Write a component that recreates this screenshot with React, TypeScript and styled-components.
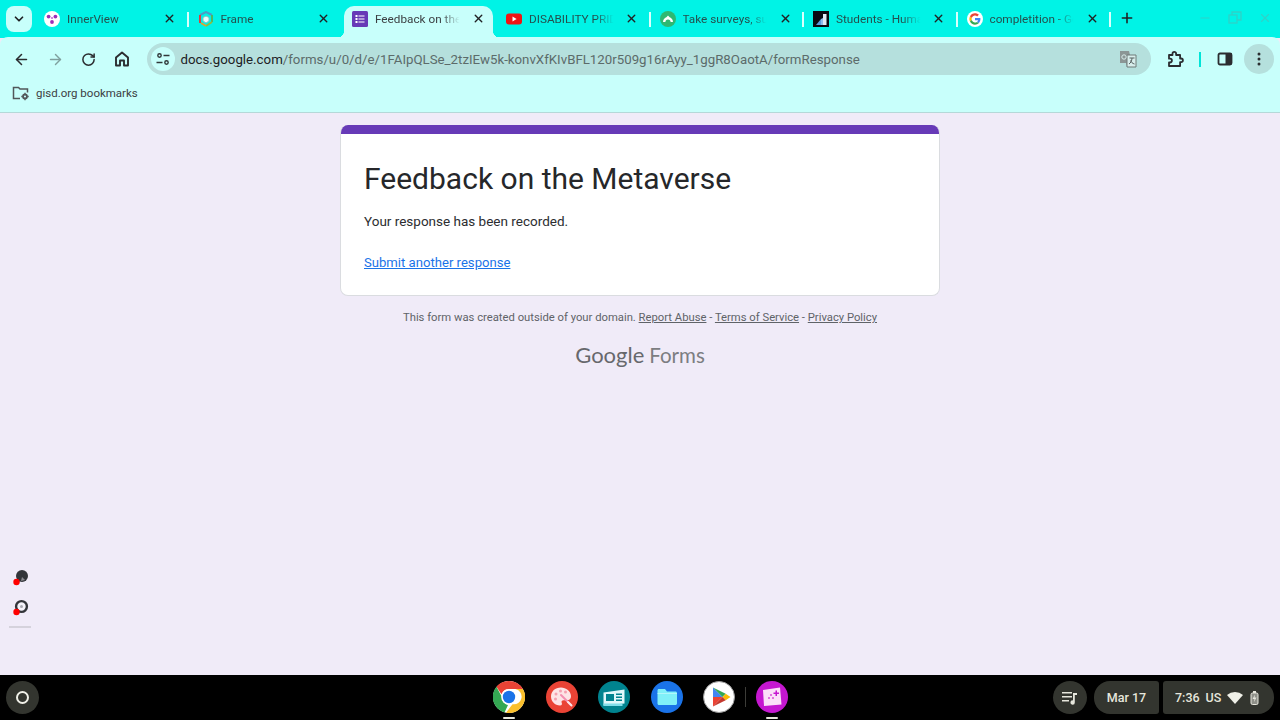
import styled, { createGlobalStyle } from "styled-components";
import { ArrowLeft, ArrowRight, RotateCw, Plus, X, Minus, ChevronDown } from "lucide-react";
import type { ReactNode } from "react";

const Global = createGlobalStyle`
  html, body { margin: 0; padding: 0; height: 100%; overflow: hidden; }
  body { font-family: Roboto, "Liberation Sans", sans-serif; background: #f0ebf8; }
  #root { height: 100%; }
`;

const Screen = styled.div`
  width: 1280px;
  height: 720px;
  display: flex;
  flex-direction: column;
  position: relative;
`;

const TabStrip = styled.div`
  height: 38px;
  flex: none;
  display: flex;
  align-items: flex-end;
  padding-left: 6px;
  background: #00f3e6;
`;

const TabSearch = styled.div`
  width: 26px;
  height: 26px;
  margin: 0 3px 6px 0;
  border-radius: 8px;
  background: #c8fffb;
  display: flex;
  align-items: center;
  justify-content: center;
  color: #202124;
  flex: none;
`;

const TabBox = styled.div<{ $active?: boolean }>`
  width: ${(p) => (p.$active ? 149 : 153.5)}px;
  height: 32px;
  margin: ${(p) => (p.$active ? "0 4px 0 2px" : "0")};
  flex: none;
  box-sizing: border-box;
  display: flex;
  align-items: center;
  padding: 0 ${(p) => (p.$active ? 8 : 12)}px 7px ${(p) => (p.$active ? 8 : 9)}px;
  position: relative;
  z-index: ${(p) => (p.$active ? 1 : 0)};
  border-radius: 10px 10px 0 0;
  background: ${(p) => (p.$active ? "#c8fffb" : "transparent")};
  &::before,
  &::after {
    content: "";
    display: ${(p) => (p.$active ? "block" : "none")};
    position: absolute;
    bottom: 0;
    width: 8px;
    height: 8px;
  }
  &::before {
    left: -8px;
    background: radial-gradient(circle at 0 0, transparent 8px, #c8fffb 8.5px);
  }
  &::after {
    right: -8px;
    background: radial-gradient(circle at 100% 0, transparent 8px, #c8fffb 8.5px);
  }
`;

const TabDivider = styled.span`
  position: absolute;
  right: 0;
  top: 6px;
  width: 2px;
  height: 15px;
  background: #d9fffc;
`;

const Favicon = styled.span`
  width: 16px;
  height: 16px;
  flex: none;
  display: flex;
  margin-right: 7px;
`;

const TabTitle = styled.span<{ $active?: boolean }>`
  flex: 1;
  min-width: 0;
  font-size: 11.75px;
  white-space: nowrap;
  overflow: hidden;
  color: ${(p) => (p.$active ? "#3c4043" : "#24504e")};
  mask-image: linear-gradient(to right, #000 74%, transparent 94%);
`;

const TabClose = styled.span`
  width: 14px;
  height: 14px;
  margin-left: 6px;
  flex: none;
  display: flex;
  align-items: center;
  justify-content: center;
  color: #202124;
`;

const NewTab = styled.div`
  width: 16px;
  height: 16px;
  margin: 0 0 12px 8px;
  color: #202124;
  display: flex;
`;

const WindowControls = styled.div`
  margin: 0 8px 13px auto;
  display: flex;
  gap: 16px;
  color: #2fd2c8;
`;

const Toolbar = styled.div`
  height: 44px;
  flex: none;
  display: flex;
  align-items: center;
  padding: 0 5px 0 5px;
  background: #c8fffb;
  border-radius: 8px 8px 0 0;
  margin-top: -1px;
`;

const NavButton = styled.div<{ $muted?: boolean; $round?: boolean }>`
  width: ${(p) => (p.$round ? 30 : 33.5)}px;
  height: 30px;
  flex: none;
  margin-left: ${(p) => (p.$round ? 2 : 0)}px;
  display: flex;
  align-items: center;
  justify-content: center;
  border-radius: 50%;
  color: ${(p) => (p.$muted ? "#7fa09e" : "#2b2d30")};
  background: ${(p) => (p.$round ? "#b5e0dd" : "transparent")};
`;

const Omnibox = styled.div`
  width: 1004px;
  height: 32px;
  margin: 0 8px 0 7.5px;
  flex: none;
  box-sizing: border-box;
  display: flex;
  align-items: center;
  padding: 0 14px 0 4px;
  border-radius: 16px;
  background: #b5e0dd;
`;

const SiteChip = styled.div`
  width: 24px;
  height: 24px;
  flex: none;
  margin-right: 6px;
  border-radius: 50%;
  background: #c8fffb;
  display: flex;
  align-items: center;
  justify-content: center;
`;

const Url = styled.div`
  flex: 1;
  font-size: 13.28px;
  color: #5c6b6a;
  white-space: nowrap;
`;

const Host = styled.span`
  color: #202124;
`;

const ToolbarRule = styled.span`
  width: 2px;
  height: 15px;
  margin: 0 7px 0 7px;
  background: #00e5d8;
  flex: none;
`;

const BookmarkBar = styled.div`
  height: 32px;
  flex: none;
  display: flex;
  align-items: center;
  gap: 6px;
  padding: 0 0 7px 12px;
  box-sizing: border-box;
  font-size: 11.5px;
  color: #3c4043;
  background: #c8fffb;
  border-bottom: 1px solid #b5d8d8;
`;

const Content = styled.main`
  flex: 1;
  display: flex;
  flex-direction: column;
  align-items: center;
  padding-top: 12px;
  background: #f0ebf8;
`;

const Card = styled.section`
  width: 600px;
  height: 171px;
  box-sizing: border-box;
  background: #fff;
  border: 1px solid #dadce0;
  border-top: 0;
  border-radius: 8px;
  overflow: hidden;
  flex: none;
`;

const CardBand = styled.div`
  height: 9px;
  background: #673ab7;
`;

const CardBody = styled.div`
  padding: 25px 23px 0;
`;

const Title = styled.h1`
  margin: 0;
  font-size: 30px;
  line-height: 40px;
  font-weight: 400;
  color: #26272a;
`;

const Recorded = styled.p`
  margin: 12px 0 0;
  font-size: 13.5px;
  line-height: 20px;
  color: #2c2d30;
`;

const AnotherLink = styled.a`
  display: block;
  margin-top: 22px;
  font-size: 13.125px;
  line-height: 20px;
  color: #1a73e8;
  text-decoration: underline;
`;

const Legal = styled.div`
  margin-top: 14px;
  font-size: 11.25px;
  line-height: 16px;
  color: #5f6368;
`;

const LegalLink = styled.a`
  color: #5f6368;
  text-decoration: underline;
`;

const Wordmark = styled.div`
  margin-top: 14px;
  font-family: Lato, sans-serif;
  font-size: 22px;
  line-height: 30px;
  color: #67686c;
  white-space: nowrap;
`;

const WordmarkForms = styled.span`
  margin-left: 5px;
  font-size: 20.5px;
  color: #7c7d81;
`;

const PenTools = styled.div`
  position: absolute;
  left: 8px;
  top: 569px;
  width: 23px;
  display: flex;
  flex-direction: column;
  align-items: center;
  gap: 12px;
`;

const PenRule = styled.span`
  width: 22px;
  height: 2px;
  margin-top: -3px;
  background: #d5d2dc;
`;

const Shelf = styled.footer`
  height: 45px;
  flex: none;
  display: flex;
  align-items: center;
  background: #000;
  padding: 0 6px 0 6px;
  position: relative;
`;

const Launcher = styled.div`
  width: 33px;
  height: 33px;
  border-radius: 50%;
  background: #33352f;
  display: flex;
  align-items: center;
  justify-content: center;
`;

const LauncherRing = styled.span`
  width: 9px;
  height: 9px;
  border: 2px solid #f0f0e8;
  border-radius: 50%;
`;

const AppRow = styled.div`
  position: absolute;
  left: 493px;
  top: 6px;
  display: flex;
  gap: 20.5px;
  align-items: center;
`;

const AppIcon = styled.div<{ $open?: boolean }>`
  width: 32px;
  height: 32px;
  position: relative;
  flex: none;
  &::after {
    content: "";
    display: ${(p) => (p.$open ? "block" : "none")};
    position: absolute;
    left: 10px;
    bottom: -6px;
    width: 12px;
    height: 2px;
    border-radius: 1px;
    background: #e8e8dc;
  }
`;

const AppRule = styled.span`
  position: absolute;
  left: 252px;
  top: 6px;
  width: 1px;
  height: 20px;
  background: #3c3c38;
`;

const Tray = styled.div`
  margin-left: auto;
  display: flex;
  align-items: center;
  color: #e6e6dc;
`;

const TrayRound = styled.div`
  width: 34px;
  height: 33px;
  border-radius: 50%;
  background: #33352f;
  margin-right: 7px;
  display: flex;
  align-items: center;
  justify-content: center;
`;

const DatePill = styled.div`
  width: 65px;
  height: 33px;
  margin-right: 4px;
  border-radius: 16px 3px 3px 16px;
  background: #33352f;
  display: flex;
  align-items: center;
  justify-content: center;
  font-weight: 500;
  font-size: 12.5px;
`;

const StatusPill = styled.div`
  width: 111px;
  height: 33px;
  border-radius: 3px 16px 16px 3px;
  background: #33352f;
  display: flex;
  align-items: center;
  gap: 6px;
  padding-left: 12px;
  box-sizing: border-box;
  font-size: 12.5px;
  font-weight: 500;
`;

const InnerViewIcon = () => (
  <svg width="16" height="16" viewBox="0 0 16 16">
    <circle cx="8" cy="8" r="8" fill="#fff" />
    <circle cx="4.600" cy="5.600" r="1.900" fill="#9c2fb8" />
    <circle cx="11.400" cy="5.600" r="1.900" fill="#9c2fb8" />
    <circle cx="8" cy="11" r="1.900" fill="#9c2fb8" />
    <circle cx="8" cy="7" r="1.100" fill="#c56ad8" />
  </svg>
);

const FrameIcon = () => (
  <svg width="16" height="16" viewBox="0 0 16 16" fill="none" strokeWidth="2">
    <path d="M2 4 8 1l6 3" stroke="#4d9cc4" />
    <path d="M14 4v7" stroke="#4fb85f" />
    <path d="M14 11 8 15" stroke="#8dbb45" />
    <path d="M8 15 3 12" stroke="#e0a030" />
    <path d="M2 4v8" stroke="#e23c3c" />
    <path d="M5 6.500 8 5l3 1.500v3.500L8 12l-3-2z" fill="#eafcf9" stroke="#7fc4c4" strokeWidth="1" />
  </svg>
);

const FormsIcon = () => (
  <svg width="16" height="16" viewBox="0 0 16 16">
    <rect width="16" height="16" rx="1.500" fill="#673ab7" />
    <path d="M3.500 4h2v2h-2zM6.500 4.400h6v1.200h-6zM3.500 7h2v2h-2zM6.500 7.400h6v1.200h-6zM3.500 10h2v2h-2zM6.500 10.400h6v1.200h-6z" fill="#fff" />
  </svg>
);

const YouTubeIcon = () => (
  <svg width="16" height="16" viewBox="0 0 16 16">
    <rect y="2.500" width="16" height="11" rx="3" fill="#f01414" />
    <path d="M6.500 5.600 10.600 8l-4.100 2.400z" fill="#fff" />
  </svg>
);

const SurveyIcon = () => (
  <svg width="16" height="16" viewBox="0 0 16 16">
    <circle cx="8" cy="8" r="8" fill="#2eb872" />
    <path d="M3 11a5 5 0 0 1 10 0h-2.400a2.600 2.600 0 0 0-5.200 0z" fill="#fff" />
    <path d="M6.200 6.500 8 4.500l1.800 2z" fill="#fff" />
  </svg>
);

const StudentsIcon = () => (
  <svg width="16" height="16" viewBox="0 0 16 16">
    <rect width="16" height="16" fill="#0a0a12" />
    <path d="M3 14 8 8v6z" fill="#5a9be0" />
    <path d="M8 8l2-1v7H8z" fill="#8dbcec" />
    <path d="M10 3h3.500v11H10z" fill="#dfeaf5" />
  </svg>
);

const GoogleIcon = () => (
  <svg width="16" height="16" viewBox="0 0 48 48">
    <circle cx="24" cy="24" r="24" fill="#fff" />
    <g transform="translate(7 7) scale(.708)">
      <path fill="#EA4335" d="M24 9.500c3.500 0 6.700 1.200 9.200 3.600l6.900-6.900C35.900 2.400 30.500 0 24 0 14.600 0 6.500 5.400 2.600 13.200l8 6.200C12.500 13.700 17.800 9.500 24 9.500z" />
      <path fill="#4285F4" d="M46.900 24.500c0-1.600-.1-3.100-.4-4.500H24v9h12.900c-.6 3-2.200 5.500-4.700 7.200l7.700 6c4.500-4.200 7-10.300 7-17.700z" />
      <path fill="#FBBC05" d="M10.500 28.600c-.5-1.400-.8-3-.8-4.600s.3-3.200.8-4.600l-8-6.200C.9 16.500 0 20.100 0 24s.9 7.500 2.600 10.800l7.900-6.200z" />
      <path fill="#34A853" d="M24 48c6.500 0 11.900-2.100 15.900-5.800l-7.700-6c-2.200 1.400-4.900 2.300-8.200 2.300-6.200 0-11.500-4.200-13.400-9.900l-8 6.200C6.500 42.600 14.600 48 24 48z" />
    </g>
  </svg>
);

const ChromeIcon = () => (
  <svg width="32" height="32" viewBox="0 0 32 32">
    <circle cx="16" cy="16" r="16" fill="#fff" />
    <path d="M16 0a16 16 0 0 1 13.860 8H16a8 8 0 0 0-7.500 5.200L3.400 5.800A16 16 0 0 1 16 0z" fill="#ea4335" />
    <path d="M3.400 5.800 9.200 16.500a7 7 0 0 0 5.800 7.400L11.500 31.400A16 16 0 0 1 3.400 5.800z" fill="#34a853" />
    <path d="M29.860 8A16 16 0 0 1 13 31.700l6.500-8.500a7.500 7.500 0 0 0 2.800-15.200z" fill="#fbc02d" />
    <circle cx="16" cy="16" r="7.800" fill="#fff" />
    <circle cx="16" cy="16" r="6.200" fill="#1a73e8" />
  </svg>
);

const PaintIcon = () => (
  <svg width="32" height="32" viewBox="0 0 32 32">
    <circle cx="16" cy="16" r="16" fill="#ea4335" />
    <path d="M15 6.500c-6 0-10 3.900-10 9 0 4.800 3.900 9 9 9 2.100 0 2.300-1.400 1.700-2.700-.6-1.400.2-2.600 1.800-2.600h3.500c2.400 0 4-1.500 4-4 0-5-5-8.700-10-8.700z" fill="#fde4e6" />
    <circle cx="10" cy="13" r="1.500" fill="#f4a0b0" />
    <circle cx="14.500" cy="10" r="1.500" fill="#f4a0b0" />
    <circle cx="19.500" cy="11" r="1.500" fill="#f4a0b0" />
    <circle cx="9.500" cy="18" r="1.500" fill="#f4a0b0" />
    <path d="m15 14 10 10" stroke="#f48fb1" strokeWidth="2" strokeLinecap="round" />
    <path d="m22 21 3.500 3.500" stroke="#fde4e6" strokeWidth="2" strokeLinecap="round" />
  </svg>
);

const ClassIcon = () => (
  <svg width="32" height="32" viewBox="0 0 32 32">
    <circle cx="16" cy="16" r="16" fill="#00838f" />
    <path d="M5.500 11.500 26.500 8.500v14l-21 2z" fill="#e0f7fa" />
    <rect x="8" y="13" width="8" height="7" fill="#00838f" />
    <path d="M18 12.500h6v1.500h-6zM18 15.500h6V17h-6zM18 18.500h6V20h-6z" fill="#00838f" />
    <path d="M5.500 22.500h19v2.500h-19z" fill="#80deea" />
  </svg>
);

const FilesIcon = () => (
  <svg width="32" height="32" viewBox="0 0 32 32">
    <circle cx="16" cy="16" r="16" fill="#1a73e8" />
    <path d="M6.500 9.500c0-.8.600-1.500 1.500-1.500h6l2 2.500h8.500c.8 0 1.500.7 1.500 1.500v10.500c0 .8-.7 1.500-1.500 1.500H8c-.9 0-1.500-.7-1.500-1.500z" fill="#80f0f8" />
    <path d="M6.500 12h19.500v.8H6.500z" fill="#bdf8fc" />
  </svg>
);

const PlayIcon = () => (
  <svg width="32" height="32" viewBox="0 0 32 32">
    <circle cx="16" cy="16" r="15.500" fill="#fff" stroke="#9a9a9a" />
    <path d="M10 6.500v9.500h9.500z" fill="#4285f4" />
    <path d="M10 6.500 19.500 16l3.200-3.200z" fill="#34a853" />
    <path d="M10 25.500 19.500 16H10z" fill="#ea4335" />
    <path d="M22.700 12.800 19.500 16l3.200 3.200 4.800-3.200z" fill="#fbbc04" />
    <path d="M10 25.500 22.700 19.200 19.500 16z" fill="#c5392f" />
  </svg>
);

const CanvasIcon = () => (
  <svg width="32" height="32" viewBox="0 0 32 32">
    <circle cx="16" cy="16" r="16" fill="#c517d0" />
    <path d="M7 9l17-2.500 1.500 17L8 25z" fill="#fbe0f8" />
    <path d="M17.500 11.500h2v-2h1.500v2h2V13h-2v2h-1.500v-2h-2z" fill="#c517d0" />
    <circle cx="15" cy="14" r="1" fill="#d84fd8" />
    <circle cx="17" cy="17" r="1" fill="#d84fd8" />
    <circle cx="13" cy="17" r="1" fill="#d84fd8" />
  </svg>
);

const tabs: { title: string; icon: ReactNode; active?: boolean; divider?: boolean }[] = [
  { title: "InnerView", icon: <InnerViewIcon />, divider: true },
  { title: "Frame", icon: <FrameIcon /> },
  { title: "Feedback on the Metaverse", icon: <FormsIcon />, active: true },
  { title: "DISABILITY PRIDE MONTH", icon: <YouTubeIcon />, divider: true },
  { title: "Take surveys, support", icon: <SurveyIcon />, divider: true },
  { title: "Students - Human Rights", icon: <StudentsIcon />, divider: true },
  { title: "completition - Google", icon: <GoogleIcon />, divider: true },
];

export default function App() {
  return (
    <Screen>
      <Global />
      <TabStrip>
        <TabSearch>
          <ChevronDown size={14} strokeWidth={3} />
        </TabSearch>
        {tabs.map((t) => (
          <TabBox key={t.title} $active={t.active}>
            <Favicon>{t.icon}</Favicon>
            <TabTitle $active={t.active}>{t.title}</TabTitle>
            <TabClose>
              <X size={13} strokeWidth={2.6} />
            </TabClose>
            {t.divider && <TabDivider />}
          </TabBox>
        ))}
        <NewTab>
          <Plus size={16} strokeWidth={2.4} />
        </NewTab>
        <WindowControls>
          <Minus size={14} />
          <svg width="14" height="14" viewBox="0 0 14 14" fill="none" stroke="currentColor" strokeWidth="1.300">
            <rect x="1" y="4" width="8" height="8" />
            <path d="M4 4V1h9v8h-4" />
          </svg>
          <X size={14} />
        </WindowControls>
      </TabStrip>
      <Toolbar>
        <NavButton><ArrowLeft size={17} strokeWidth={2.2} /></NavButton>
        <NavButton $muted><ArrowRight size={17} strokeWidth={2} /></NavButton>
        <NavButton><RotateCw size={15} strokeWidth={2.4} /></NavButton>
        <NavButton>
          <svg width="18" height="18" viewBox="0 0 18 18" fill="none" stroke="currentColor" strokeWidth="1.900" strokeLinejoin="round">
            <path d="M3 7.500 9 2.500l6 5v8h-4v-5H7v5H3z" />
          </svg>
        </NavButton>
        <Omnibox>
          <SiteChip>
            <svg width="16" height="16" viewBox="0 0 16 16" fill="none" stroke="#30383a" strokeWidth="1.400">
              <circle cx="4.500" cy="4.500" r="1.700" />
              <path d="M8.500 4.500h6M1.500 11.500h6" />
              <circle cx="11.500" cy="11.500" r="1.700" />
            </svg>
          </SiteChip>
          <Url>
            <Host>docs.google.com</Host>/forms/u/0/d/e/1FAIpQLSe_2tzIEw5k-konvXfKIvBFL120r509g16rAyy_1ggR8OaotA/formResponse
          </Url>
          <svg width="18" height="18" viewBox="0 0 18 18">
            <path d="M1 1h9l1 4h6v12H8l-1-4H1z" fill="#8b9695" />
            <path d="M8 5h9v12H8z" fill="#d8eeec" stroke="#6f7a79" />
            <path d="M10.500 8h5M13 8c0 3-1.500 5-3 6M11.500 10.500c.8 1.800 2 3 4 3.500" stroke="#555f5e" fill="none" />
            <circle cx="5" cy="7" r="2.200" fill="none" stroke="#d8eeec" />
          </svg>
        </Omnibox>
        <NavButton>
          <svg width="18" height="18" viewBox="0 0 18 18" fill="none" stroke="currentColor" strokeWidth="1.800" strokeLinejoin="round">
            <path d="M3 5h3.500V3.700a1.800 1.800 0 0 1 3.600 0V5h4v3.500h1a1.800 1.800 0 0 1 0 3.600h-1v3.900H3v-3.500h1a1.900 1.900 0 0 0 0-3.800H3z" />
          </svg>
        </NavButton>
        <ToolbarRule />
        <NavButton>
          <svg width="16" height="16" viewBox="0 0 16 16">
            <rect x="1.500" y="2.500" width="13" height="11" rx="1.500" fill="none" stroke="currentColor" strokeWidth="1.800" />
            <rect x="8.500" y="2.500" width="6" height="11" fill="currentColor" />
          </svg>
        </NavButton>
        <NavButton $round>
          <svg width="4" height="14" viewBox="0 0 4 14" fill="currentColor">
            <circle cx="2" cy="2" r="1.500" />
            <circle cx="2" cy="7" r="1.500" />
            <circle cx="2" cy="12" r="1.500" />
          </svg>
        </NavButton>
      </Toolbar>
      <BookmarkBar>
        <svg width="18" height="16" viewBox="0 0 18 16" fill="none" stroke="#51575a" strokeWidth="1.500">
          <path d="M8 13.500H1.500V2.500h5l1.500 1.500h7.500v3.500" />
          <circle cx="13" cy="11.500" r="2" strokeWidth="1.800" />
          <path d="M13 7.800v1.400M13 13.800v1.400M9.300 11.500h1.400M15.300 11.500h1.400" strokeWidth="1.300" />
        </svg>
        gisd.org bookmarks
      </BookmarkBar>
      <Content>
        <Card>
          <CardBand />
          <CardBody>
            <Title>Feedback on the Metaverse</Title>
            <Recorded>Your response has been recorded.</Recorded>
            <AnotherLink href="#">Submit another response</AnotherLink>
          </CardBody>
        </Card>
        <Legal>
          This form was created outside of your domain. <LegalLink href="#">Report Abuse</LegalLink> - <LegalLink href="#">Terms of Service</LegalLink> - <LegalLink href="#">Privacy Policy</LegalLink>
        </Legal>
        <Wordmark>
          Google<WordmarkForms>Forms</WordmarkForms>
        </Wordmark>
      </Content>
      <PenTools>
        <svg width="18" height="18" viewBox="0 0 18 18">
          <circle cx="11" cy="7" r="6" fill="#33353a" />
          <path d="M6 10l-2 5 5-2z" fill="#33353a" />
          <path d="M10 12l1-4 3 3z" fill="#8a8a90" />
          <circle cx="5.500" cy="13" r="3.200" fill="#f00" />
        </svg>
        <svg width="18" height="18" viewBox="0 0 18 18">
          <circle cx="10.500" cy="7.500" r="5.400" fill="#f4f2fa" stroke="#33353a" strokeWidth="2.400" />
          <circle cx="10.500" cy="7.500" r="1.500" fill="#a8a8b0" />
          <circle cx="5.500" cy="13" r="3.200" fill="#f00" />
        </svg>
        <PenRule />
      </PenTools>
      <Shelf>
        <Launcher><LauncherRing /></Launcher>
        <AppRow>
          <AppIcon $open><ChromeIcon /></AppIcon>
          <AppIcon><PaintIcon /></AppIcon>
          <AppIcon><ClassIcon /></AppIcon>
          <AppIcon><FilesIcon /></AppIcon>
          <AppIcon><PlayIcon /></AppIcon>
          <AppRule />
          <AppIcon $open><CanvasIcon /></AppIcon>
        </AppRow>
        <Tray>
          <TrayRound>
            <svg width="16" height="14" viewBox="0 0 16 14" fill="#e6e6dc">
              <path d="M0 1h10v1.600H0zM0 5h10v1.600H0zM0 9h7v1.600H0z" />
              <path d="M11 2h4v2h-2.200v7.500a2.200 2.200 0 1 1-1.800-2.100z" />
            </svg>
          </TrayRound>
          <DatePill>Mar 17</DatePill>
          <StatusPill>
            7:36
            <span>US</span>
            <svg width="16" height="13" viewBox="0 0 16 13" fill="#f0f0e8">
              <path d="M0 4a12 12 0 0 1 16 0L8 13z" />
            </svg>
            <svg width="9" height="14" viewBox="0 0 9 14" style={{ marginLeft: 1 }}>
              <rect x="3" y="0" width="3" height="2" fill="#e6e6dc" />
              <rect x="1" y="2" width="7" height="11.500" rx="1.500" fill="#8e8f88" stroke="#e6e6dc" />
              <path d="M5 3.500 2.500 8h2L4 11l2.500-4.500h-2z" fill="#e6e6dc" />
            </svg>
          </StatusPill>
        </Tray>
      </Shelf>
    </Screen>
  );
}
